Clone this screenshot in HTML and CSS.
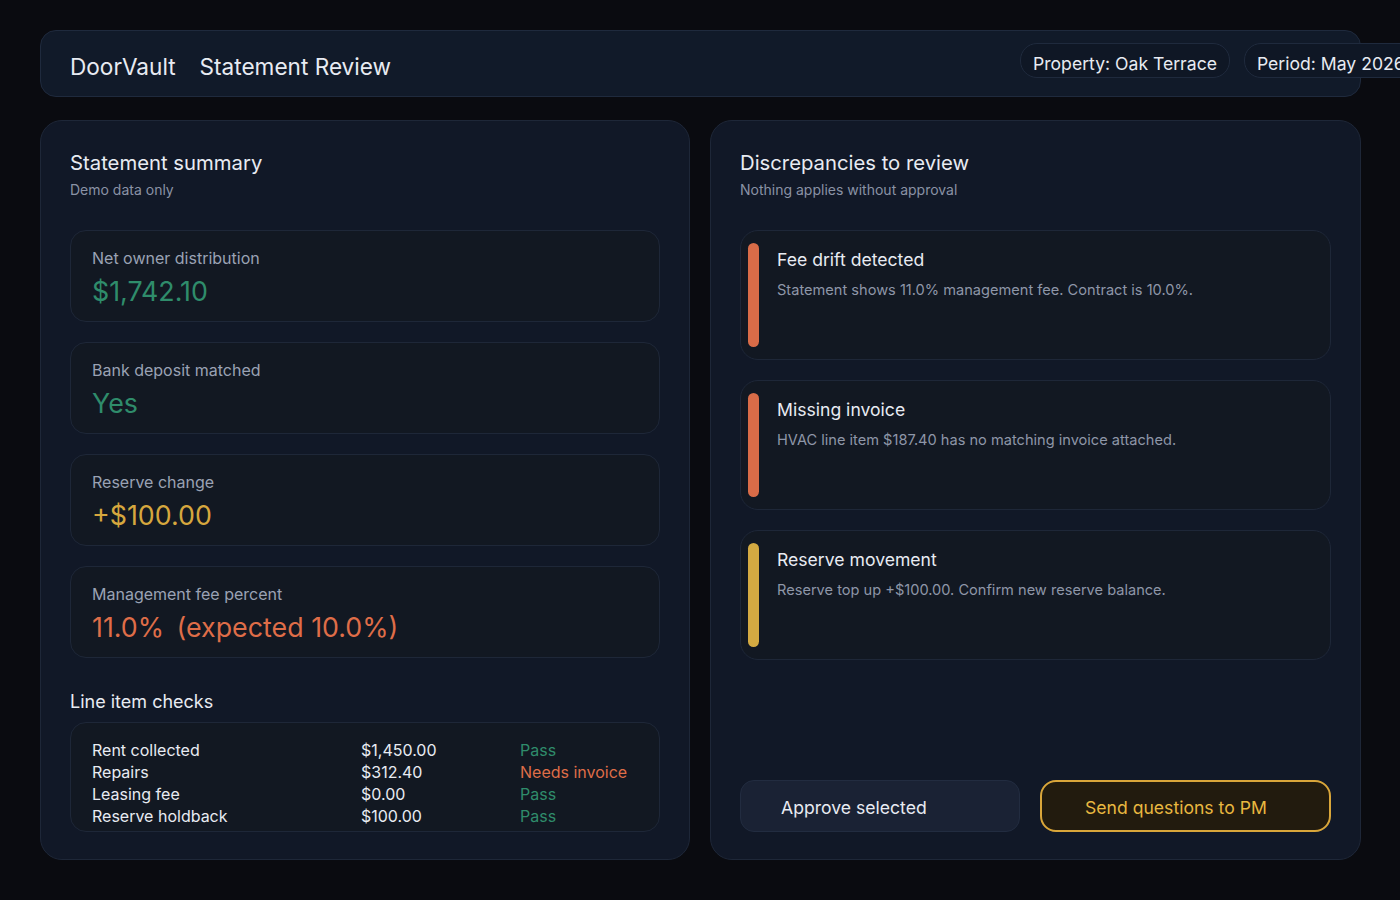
FILE: index.html
```html
<!DOCTYPE html>
<html lang="en">
  <head>
    <meta charset="UTF-8" />
    <meta name="viewport" content="width=device-width, initial-scale=1.0" />
    <title>DoorVault: Statement Review</title>
    <link rel="stylesheet" href="styles.css">
  </head>
  <body>
    <div class="page">
      <header class="topbar">
        <div class="brand">
          <span>DoorVault</span>
          <span>Statement Review</span>
        </div>
        <div class="pills">
          <span class="pill">Property: Oak Terrace</span>
          <span class="pill">Period: May 2026</span>
        </div>
      </header>

      <main class="columns">
        <section class="panel">
          <h2>Statement summary</h2>
          <p class="sub">Demo data only</p>

          <div class="stats">
            <div class="stat">
              <div class="label">Net owner distribution</div>
              <div class="value green">$1,742.10</div>
            </div>
            <div class="stat">
              <div class="label">Bank deposit matched</div>
              <div class="value green">Yes</div>
            </div>
            <div class="stat">
              <div class="label">Reserve change</div>
              <div class="value gold">+$100.00</div>
            </div>
            <div class="stat">
              <div class="label">Management fee percent</div>
              <div class="value orange">11.0% <span class="expected">(expected 10.0%)</span></div>
            </div>
          </div>

          <h3>Line item checks</h3>
          <div class="checks">
            <span>Rent collected</span><span>$1,450.00</span><span class="green">Pass</span>
            <span>Repairs</span><span>$312.40</span><span class="orange">Needs invoice</span>
            <span>Leasing fee</span><span>$0.00</span><span class="green">Pass</span>
            <span>Reserve holdback</span><span>$100.00</span><span class="green">Pass</span>
          </div>
        </section>

        <section class="panel">
          <h2>Discrepancies to review</h2>
          <p class="sub">Nothing applies without approval</p>

          <div class="issues">
            <div class="issue">
              <div class="bar bar-orange"></div>
              <div class="issue-body">
                <div class="issue-title">Fee drift detected</div>
                <div class="issue-text">Statement shows 11.0% management fee. Contract is 10.0%.</div>
              </div>
            </div>
            <div class="issue">
              <div class="bar bar-orange"></div>
              <div class="issue-body">
                <div class="issue-title">Missing invoice</div>
                <div class="issue-text">HVAC line item $187.40 has no matching invoice attached.</div>
              </div>
            </div>
            <div class="issue">
              <div class="bar bar-gold"></div>
              <div class="issue-body">
                <div class="issue-title">Reserve movement</div>
                <div class="issue-text">Reserve top up +$100.00. Confirm new reserve balance.</div>
              </div>
            </div>
          </div>

          <div class="actions">
            <button class="btn">Approve selected</button>
            <button class="btn btn-gold">Send questions to PM</button>
          </div>
        </section>
      </main>
    </div>
  </body>
</html>
```

FILE: styles.css
```css
body {
  font-family: Inter, "Noto Sans", sans-serif;
  margin: 0;
  padding: 0;
  background-color: #0a0b10;
  color: #e8ebf2;
  overflow: hidden;
}

.page {
  width: 1321px;
  margin: 30px 0 0 40px;
}

.topbar {
  display: flex;
  align-items: flex-start;
  box-sizing: border-box;
  height: 67px;
  padding: 12px 29px 0;
  background-color: #111a29;
  border: 1px solid #1f2a3d;
  border-radius: 16px;
}

.brand {
  flex-shrink: 0;
  width: 950px;
  display: flex;
  gap: 24px;
  padding-top: 10px;
  font-size: 22.6px;
  line-height: 28px;
}

.pills {
  flex-shrink: 0;
  display: flex;
  gap: 14px;
}

.pill {
  white-space: nowrap;
  font-size: 17.6px;
  line-height: 22px;
  padding: 9px 12px 2px;
  border: 1px solid #1f2a3d;
  border-radius: 17px;
  background-color: #0f1725;
}

.columns {
  display: grid;
  grid-template-columns: 650px 1fr;
  gap: 20px;
  margin-top: 23px;
}

.panel {
  display: flex;
  flex-direction: column;
  box-sizing: border-box;
  height: 740px;
  padding: 29px 29px 27px;
  background-color: #111827;
  border: 1px solid #1e2738;
  border-radius: 22px;
}

h2 {
  margin: 0;
  font-size: 20.3px;
  line-height: 26px;
  font-weight: 400;
}

.sub {
  margin: 4px 0 0;
  font-size: 14px;
  line-height: 20px;
  color: #8a92a5;
}

.stats {
  display: flex;
  flex-direction: column;
  gap: 20px;
  margin-top: 30px;
}

.stat {
  padding: 16px 21px 13px;
  background-color: #121822;
  border: 1px solid #1e2738;
  border-radius: 16px;
}

.label {
  font-size: 16px;
  line-height: 22px;
  color: #9aa2b4;
}

.value {
  margin-top: 5px;
  font-size: 26.8px;
  line-height: 34px;
}

.expected {
  margin-left: 5px;
}

.green {
  color: #2f8c6b;
}

.gold {
  color: #d6a73e;
}

.orange {
  color: #df6d48;
}

h3 {
  margin: 32px 0 0;
  font-size: 18px;
  line-height: 24px;
  font-weight: 400;
}

.checks {
  display: grid;
  grid-template-columns: 269px 159px 1fr;
  margin-top: 8px;
  padding: 16px 21px 4px;
  font-size: 16px;
  line-height: 22px;
  background-color: #121822;
  border: 1px solid #1e2738;
  border-radius: 16px;
}

.issues {
  display: flex;
  flex-direction: column;
  gap: 20px;
  margin-top: 30px;
}

.issue {
  display: flex;
  gap: 18px;
  padding: 12px 7px;
  background-color: #121822;
  border: 1px solid #1e2738;
  border-radius: 18px;
}

.bar {
  flex-shrink: 0;
  width: 11px;
  height: 104px;
  border-radius: 6px;
}

.bar-orange {
  background-color: #d96c48;
}

.bar-gold {
  background-color: #d4aa42;
}

.issue-body {
  padding-top: 5px;
}

.issue-title {
  font-size: 17.6px;
  line-height: 24px;
}

.issue-text {
  margin-top: 8px;
  font-size: 14.6px;
  line-height: 20px;
  color: #8e96a8;
}

.actions {
  display: grid;
  grid-template-columns: 280px 1fr;
  gap: 20px;
  margin-top: auto;
}

.btn {
  font-family: inherit;
  font-size: 17.6px;
  height: 52px;
  text-align: left;
  padding: 2px 0 0 40px;
  color: #e8ebf2;
  background-color: #1a2234;
  border: 1px solid #222c40;
  border-radius: 14px;
  cursor: pointer;
}

.btn-gold {
  padding-left: 43px;
  color: #e9b840;
  background-color: #221b0e;
  border: 2px solid #d9a63a;
  border-radius: 16px;
}
```
